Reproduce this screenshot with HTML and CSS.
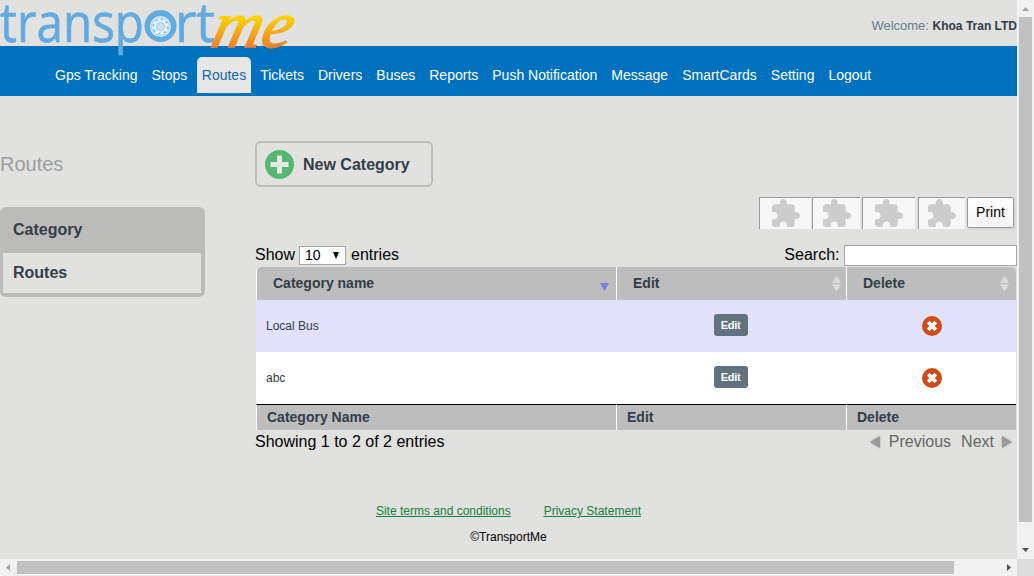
FILE: index.html
```
<!DOCTYPE html>
<html lang="en">
<head>
<meta charset="utf-8">
<title>TransportMe - Routes</title>
<link rel="stylesheet" href="styles.css">
</head>
<body>
<svg class="defs" width="0" height="0">
  <symbol id="puzzle" viewBox="2 1 21 21">
    <path d="M20.500 11H19V7c0-1.100-.9-2-2-2h-4V3.500C13 2.120 11.880 1 10.500 1S8 2.120 8 3.500V5H4c-1.100 0-1.990.9-1.990 2v3.800H3.500c1.490 0 2.700 1.210 2.700 2.700s-1.210 2.700-2.700 2.700H2V20c0 1.100.9 2 2 2h3.800v-1.500c0-1.490 1.210-2.700 2.700-2.700 1.490 0 2.700 1.210 2.700 2.700V22H17c1.100 0 2-.9 2-2v-4h1.500c1.380 0 2.500-1.120 2.500-2.500S21.880 11 20.500 11z"/>
  </symbol>
  <symbol id="cross" viewBox="0 0 20 20">
    <circle cx="10" cy="10" r="10" fill="#d24a16"/>
    <path d="M6.200 6.200l7.600 7.600M13.800 6.200l-7.600 7.600" stroke="#fff" stroke-width="3.800"/>
  </symbol>
  <symbol id="sort" viewBox="0 0 9 16">
    <path d="M4.500 0L9 7H0zM0 8.500h9L4.500 15.500z"/>
  </symbol>
</svg>
<div class="window">
  <div class="page">
    <header class="header">
      <svg class="logo" width="300" height="60" viewBox="0 0 300 60">
        <defs>
          <linearGradient id="gold" gradientUnits="userSpaceOnUse" x1="0" y1="-31" x2="0" y2="1">
            <stop offset="0" stop-color="#fbd600"/>
            <stop offset="1" stop-color="#ee7c30"/>
          </linearGradient>
        </defs>
        <g class="logo-blue">
          <text x="0" y="42" textLength="144" lengthAdjust="spacingAndGlyphs">transp</text>
          <text x="175" y="42" textLength="40" lengthAdjust="spacingAndGlyphs">rt</text>
        </g>
        <circle cx="160.500" cy="26" r="16" fill="#62abe0"/>
        <circle cx="160.500" cy="26.500" r="10.500" fill="#e4f2fb"/>
        <circle cx="160.500" cy="26.500" r="7.200" fill="none" stroke="#7fbbe7" stroke-width="1.600" stroke-dasharray="2.200 3.450"/>
        <circle cx="160.500" cy="26.500" r="9" fill="none" stroke="#8fc4ea" stroke-width=".8"/>
        <circle cx="160.500" cy="26.500" r="4" fill="#c5e2f6" stroke="#8fc4ea" stroke-width=".8"/>
        <text class="logo-me" transform="translate(209 47) skewX(-14)" x="0" y="0" textLength="80" lengthAdjust="spacingAndGlyphs">me</text>
      </svg>
      <p class="welcome">Welcome: <b>Khoa Tran LTD</b></p>
    </header>
    <nav class="nav">
      <a>Gps Tracking</a><a>Stops</a><a class="current">Routes</a><a>Tickets</a><a>Drivers</a><a>Buses</a><a>Reports</a><a>Push Notification</a><a>Message</a><a>SmartCards</a><a>Setting</a><a>Logout</a>
    </nav>
    <main class="main">
      <aside class="sidebar">
        <h1>Routes</h1>
        <div class="menu">
          <a class="menu-head">Category</a>
          <a class="menu-item">Routes</a>
        </div>
      </aside>
      <section class="content">
        <button class="new">
          <svg width="30" height="30" viewBox="0 0 30 30"><circle cx="14.500" cy="15.500" r="14.500" fill="#54b871"/><path d="M14.500 9v13M8 15.500h13" stroke="#e8e9e6" stroke-width="5" stroke-linecap="square"/></svg>
          <span>New Category</span>
        </button>
        <div class="tools">
          <span class="plugin p1"><svg><use href="#puzzle"/></svg></span>
          <span class="plugin p2"><svg><use href="#puzzle"/></svg></span>
          <span class="plugin p3"><svg><use href="#puzzle"/></svg></span>
          <span class="plugin p4"><svg><use href="#puzzle"/></svg></span>
          <span class="print">Print</span>
        </div>
        <div class="filters">
          <span class="word">Show</span>
          <span class="select">10<svg width="6" height="7" viewBox="0 0 6 7"><path d="M0 0h6L3 7z"/></svg></span>
          <span class="word">entries</span>
          <span class="word search-label">Search:</span>
          <input class="search" type="text">
        </div>
        <table class="table">
          <colgroup><col class="c1"><col class="c2"><col class="c3"></colgroup>
          <thead>
            <tr>
              <th><div class="th">Category name<svg class="sorted" width="9" height="8" viewBox="0 0 9 8"><path d="M0 0h9L4.500 8z"/></svg></div></th>
              <th><div class="th">Edit<svg class="sort" width="9" height="16"><use href="#sort"/></svg></div></th>
              <th><div class="th">Delete<svg class="sort" width="9" height="16"><use href="#sort"/></svg></div></th>
            </tr>
          </thead>
          <tbody>
            <tr class="odd"><td>Local Bus</td><td class="mid"><span class="edit">Edit</span></td><td class="mid"><svg class="del" width="20" height="20"><use href="#cross"/></svg></td></tr>
            <tr><td>abc</td><td class="mid"><span class="edit">Edit</span></td><td class="mid"><svg class="del" width="20" height="20"><use href="#cross"/></svg></td></tr>
          </tbody>
          <tfoot><tr><th>Category Name</th><th>Edit</th><th>Delete</th></tr></tfoot>
        </table>
        <div class="pager">
          <span class="info">Showing 1 to 2 of 2 entries</span>
          <svg class="arrow" width="12" height="14" viewBox="0 0 12 14"><path d="M11 1v12L1 7z"/></svg>
          <span class="prev">Previous</span>
          <span class="next">Next</span>
          <svg class="arrow" width="12" height="14" viewBox="0 0 12 14"><path d="M1 1v12L11 7z"/></svg>
        </div>
      </section>
    </main>
    <footer class="footer">
      <div class="links"><a>Site terms and conditions</a><a>Privacy Statement</a></div>
      <div class="copy">©TransportMe</div>
    </footer>
  </div>
  <div class="vbar">
    <svg width="17" height="17"><path d="M5 11h7L8.500 7z" fill="#a3a3a3"/></svg>
    <div class="vthumb"></div>
    <svg class="end" width="17" height="17"><path d="M5 6h7L8.500 10z" fill="#505050"/></svg>
  </div>
  <div class="hbar">
    <svg width="17" height="17"><path d="M10 5v7L6 8.500z" fill="#a3a3a3"/></svg>
    <div class="hthumb"></div>
    <svg class="end" width="17" height="17"><path d="M7 5v7l4-3.500z" fill="#505050"/></svg>
  </div>
  <div class="corner"></div>
</div>
</body>
</html>
```
FILE: styles.css
```
* { box-sizing: border-box; }
body { margin: 0; font-family: "Liberation Sans", Arial, sans-serif; font-size: 16px; color: #000; }
svg { display: block; flex: none; }
.defs { position: absolute; }
.window { display: grid; grid-template: 559px 17px / 1017px 17px; width: 1034px; height: 576px; overflow: hidden; }
.page { background: #e1e1df; overflow: hidden; }

.header { display: flex; justify-content: space-between; height: 46px; }
.logo { position: relative; z-index: 1; overflow: visible; }
.logo-blue { font: 400 54px "Open Sans", sans-serif; fill: #62abe0; stroke: #62abe0; stroke-width: .6px; }
.logo-me { font: italic 400 66px "Liberation Serif", serif; fill: url(#gold); stroke: url(#gold); stroke-width: 1.500px; }
.welcome { margin: 0; padding-top: 18px; font-size: 13px; line-height: 16px; color: #6b7c85; white-space: nowrap; }
.welcome b { font-size: 12px; color: #333d47; }

.nav { display: flex; height: 50px; padding: 11px 0 0 50px; gap: 4px; background: #0071be; }
.nav a { height: 36px; padding: 0 5px; font-size: 14px; line-height: 37px; color: #fff; white-space: nowrap; }
.nav .current { margin-left: .5px; background: #e6e6e6; color: #1269b0; border-radius: 5px 5px 0 0; }

.main { display: flex; gap: 50px; height: 356px; }
.sidebar { width: 205px; padding-top: 56px; }
.sidebar h1 { margin: 0 0 31px; font-size: 20px; line-height: 24px; font-weight: 400; color: #9a9e9f; }
.menu { display: flex; flex-direction: column; height: 90px; padding: 0 4px 4px 3px; background: #bbbbb9; border-radius: 6px; }
.menu a { padding-left: 10px; font-size: 16px; font-weight: bold; color: #333d47; }
.menu-head { height: 46px; line-height: 45px; }
.menu-item { height: 40px; line-height: 39px; background: #e1e1df; }

.content { width: 762px; padding-top: 45px; }
.new { display: flex; align-items: center; gap: 8px; width: 178px; height: 46px; padding: 0 8px; border: 2px solid #bbb; border-radius: 6px; background: none; font: bold 16px "Liberation Sans", Arial, sans-serif; color: #333d47; white-space: nowrap; }
.new span { padding-top: 2px; }
.tools { display: flex; justify-content: flex-end; height: 32px; margin-top: 10px; padding-right: 3px; }
.plugin { display: flex; align-items: center; justify-content: center; height: 32px; padding-bottom: 2px; background: #f7f7f7; border: solid #999; border-width: 1px 0 0 1px; fill: #ccc; }
.plugin svg { width: 28px; height: 28px; }
.p1 { width: 52px; margin-right: 1px; }
.p2 { width: 48px; margin-right: 2px; }
.p3 { width: 53px; margin-right: 3px; }
.p4 { width: 47px; margin-right: 2px; }
.print { width: 47px; height: 31px; border: 1px solid #999; border-radius: 2px; background: linear-gradient(#fff, #f5f5f5); box-shadow: 1px 1px 2px #ccc; font-size: 14px; line-height: 29px; text-align: center; }

.filters { display: flex; align-items: center; height: 22px; margin-top: 15px; line-height: 20px; }
.word { padding-bottom: 1px; }
.select { display: flex; align-items: center; justify-content: space-between; width: 47px; height: 19px; margin: 0 5px 0 4px; padding: 0 6px 0 5px; border: 1px solid #a5a5a5; background: #fff; font-size: 14px; line-height: 17px; }
.search-label { margin: 0 4.500px 0 auto; }
.search { width: 173px; height: 21px; padding: 1px; border: 1px solid #a5a5a5; background: #fff; }

.table { width: 760px; margin: 1px 0 0 1px; table-layout: fixed; border-collapse: separate; border-spacing: 0; color: #333d47; }
.c1 { width: 360px; }
.c2 { width: 230px; }
.c3 { width: 170px; }
.table th { background: #bdbdbd; border-left: 1px solid #fff; text-align: left; font-size: 14px; }
.table thead th { height: 33px; padding: 0; }
.table thead th:first-child { border-top-left-radius: 5px; }
.table thead th:last-child { border-top-right-radius: 5px; }
.th { display: flex; align-items: center; justify-content: space-between; height: 33px; padding: 0 7px 0 16px; line-height: 31px; }
.sorted { margin: 7px 0 0; fill: #7c7fe0; }
.sort { margin-right: -2px; fill: #dcdcdc; }
th:last-child .sort { margin-right: 0; }
.table td { height: 52px; padding: 0 10px; background: #fff; font-size: 12px; }
.table .odd td { background: #e2e2ff; }
.table .mid { padding: 0; text-align: center; }
.edit { display: inline-block; width: 34px; height: 22px; margin: 0 1px 2px 0; border-radius: 3px; background: #61737f; font-size: 11px; font-weight: bold; letter-spacing: -.3px; line-height: 22px; color: #fff; vertical-align: middle; }
.del { margin: 0 auto; position: relative; left: 1px; }
.table tfoot th { height: 26px; padding: 0 10px 2px; border-top: 1px solid #000; line-height: 20px; }

.pager { display: flex; align-items: center; height: 22px; padding-top: 1px; color: #666; }
.info { margin-right: auto; color: #000; }
.arrow { fill: #999; filter: drop-shadow(0 0 1px #aaa); }
.prev { margin: 0 10px 0 8px; }
.next { margin-right: 7px; }
.pager .arrow:last-child { margin-right: 4px; }

.footer { padding-top: 51px; font-size: 12px; line-height: 16px; text-align: center; }
.links { display: flex; justify-content: center; gap: 33px; color: #17803d; text-decoration: underline; }
.links a { text-decoration: underline; }
.copy { margin-top: 10px; }

.vbar { display: flex; flex-direction: column; background: #f1f1f1; }
.vthumb { width: 13px; height: 505px; margin-left: 2px; background: #c1c1c1; }
.hbar { display: flex; background: #f1f1f1; }
.hthumb { width: 937px; height: 13px; margin-top: 2px; background: #c1c1c1; }
.vbar .end { margin-top: auto; }
.hbar .end { margin-left: auto; }
.corner { background: #dcdcdc; }
```
